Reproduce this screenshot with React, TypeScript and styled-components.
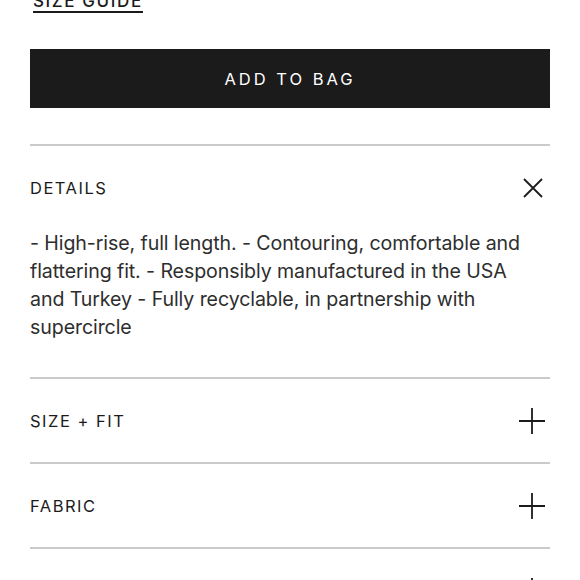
import React from "react";
import styled, { createGlobalStyle } from "styled-components";

const Global = createGlobalStyle`
  html, body { margin: 0; padding: 0; background: #fff; }
  body { font-family: "Inter", "Liberation Sans", sans-serif; overflow: hidden; }
`;

const Page = styled.div`
  padding: 0 30px;
  width: 580px;
  box-sizing: border-box;
  margin-top: -9px;
`;

const TopRow = styled.div`
  display: flex;
`;

const SizeGuide = styled.a`
  display: block;
  margin-left: 3px;
  font-size: 17px;
  letter-spacing: 1.6px;
  font-weight: 500;
  color: #1b1b1b;
  line-height: 20px;
  border-bottom: 2px solid #1b1b1b;
  text-decoration: none;
`;

const AddToBag = styled.button`
  display: flex;
  align-items: center;
  justify-content: center;
  width: 100%;
  height: 59px;
  margin-top: 36px;
  background: #1b1b1b;
  color: #fff;
  border: none;
  font-family: "Inter", "Liberation Sans", sans-serif;
  font-size: 16.5px;
  letter-spacing: 3px;
  font-weight: 400;
  padding: 0;
`;

const Accordion = styled.div`
  margin-top: 36px;
  border-top: 2px solid #cacaca;
`;

const Section = styled.div`
  border-bottom: 2px solid #cacaca;
`;

const Header = styled.div`
  display: flex;
  align-items: center;
  justify-content: space-between;
  height: 83px;
`;

const Title = styled.span`
  font-size: 16.5px;
  letter-spacing: 1.5px;
  color: #1b1b1b;
  font-weight: 400;
`;

const IconBox = styled.span<{ $size: number }>`
  display: flex;
  width: ${(p) => p.$size}px;
  height: ${(p) => p.$size}px;
  margin-right: ${(p) => (p.$size === 20 ? 7 : 5)}px;
`;

const Body = styled.p`
  margin: 0;
  padding: 0 25px 36px 0;
  font-size: 19.6px;
  line-height: 28px;
  color: #2e2e2e;
  letter-spacing: -0.1px;
`;

const CloseIcon = () => (
  <IconBox $size={20}>
    <svg width="20" height="20" viewBox="0 0 20 20">
      <path d="M1 1 L19 19 M19 1 L1 19" stroke="#1b1b1b" strokeWidth="1.8" fill="none" />
    </svg>
  </IconBox>
);

const PlusIcon = () => (
  <IconBox $size={26}>
    <svg width="26" height="26" viewBox="0 0 26 26">
      <path d="M13 0 V26 M0 13 H26" stroke="#1b1b1b" strokeWidth="1.8" fill="none" />
    </svg>
  </IconBox>
);

const sections = [
  {
    title: "DETAILS",
    open: true,
    body:
      "- High-rise, full length. - Contouring, comfortable and flattering fit. - Responsibly manufactured in the USA and Turkey - Fully recyclable, in partnership with supercircle",
  },
  { title: "SIZE + FIT", open: false },
  { title: "FABRIC", open: false },
  { title: "CARE", open: false },
];

export default function App() {
  return (
    <Page>
      <Global />
      <TopRow>
        <SizeGuide>SIZE GUIDE</SizeGuide>
      </TopRow>
      <AddToBag>ADD TO BAG</AddToBag>
      <Accordion>
        {sections.map((s) => (
          <Section key={s.title}>
            <Header>
              <Title>{s.title}</Title>
              {s.open ? <CloseIcon /> : <PlusIcon />}
            </Header>
            {s.open && <Body>{s.body}</Body>}
          </Section>
        ))}
      </Accordion>
    </Page>
  );
}
